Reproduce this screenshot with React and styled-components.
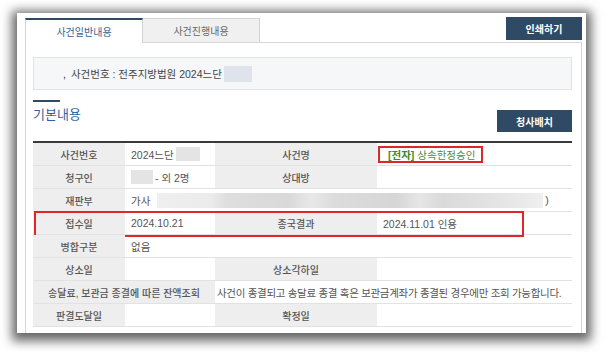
import styled, { createGlobalStyle, css } from "styled-components";

const GlobalStyle = createGlobalStyle`
  html, body {
    margin: 0;
    padding: 0;
    background: #fff;
  }
  body {
    font-family: "Liberation Sans", "Noto Sans CJK KR", sans-serif;
    overflow: hidden;
  }
  * { box-sizing: border-box; }
`

const navy = "#2f4a64";

const Page = styled.div`
  padding: 13px 0 0 17px;
  height: 352px;
`

const Window = styled.div`
  width: 569px;
  height: 320px;
  background: #fff;
  box-shadow: 0 3px 10px 5px rgba(0, 0, 0, 0.6);
  padding: 5px 4px 0 8px;
  display: flex;
  flex-direction: column;
`

const TabBar = styled.div`
  display: flex;
  align-items: flex-end;
  height: 24px;
`

const Tab = styled.div`
  width: ${p => p.$w}px;
  display: flex;
  align-items: center;
  justify-content: center;
  font-size: 10px;
  position: relative;

  ${p => p.$active ? css`
    height: 25px;
    margin-bottom: -1px;
    z-index: 1;
    background: #fff;
    color: #35618f;
    border-top: 2px solid ${navy};
    border-left: 1px solid #d3d3d3;
    border-right: 1px solid #d3d3d3;
  ` : css`
    height: 24px;
    background: #f0f0f0;
    color: #666;
    border-top: 1px solid #d3d3d3;
    border-right: 1px solid #d3d3d3;
  `}
`

const DarkButton = styled.div`
  width: ${p => p.$w}px;
  height: ${p => p.$h}px;
  background: ${navy};
  color: #fff;
  font-size: 10px;
  font-weight: 700;
  display: flex;
  align-items: center;
  justify-content: center;
`

const PrintButton = styled(DarkButton)`
  margin-left: auto;
  align-self: flex-start;
  margin-top: -1px;
`

const Content = styled.div`
  flex: 1;
  border: 1px solid #d6d6d6;
  border-bottom: none;
  padding: 0 9px 0 7px;
`

const InfoBox = styled.div`
  margin-top: 14px;
  height: 33px;
  background: #f6f7f9;
  border: 1px solid #e1e3e6;
  display: flex;
  align-items: center;
  padding-left: 29px;
  font-size: 10.5px;
  color: #444;
`

const Bullet = styled.span`
  margin-right: 5px;
  color: #333;
`

const Mask = styled.span`
  display: inline-block;
  width: ${p => p.$w}px;
  height: ${p => p.$h || 14}px;
  background: ${p => p.$bg || "#e4e4e4"};
  margin: ${p => p.$m || "0"};
`

const SectionHead = styled.div`
  display: flex;
  justify-content: space-between;
  align-items: flex-start;
  margin-top: 10px;
`

const TitleBlock = styled.div`
  &::before {
    content: "";
    display: block;
    width: 27px;
    height: 2px;
    background: ${navy};
  }
`

const Title = styled.h2`
  margin: 5px 0 0;
  font-size: 13px;
  line-height: 16px;
  font-weight: 400;
  color: #2d64a0;
`

const HeadButton = styled(DarkButton)`
  margin-top: 10px;
`

const Table = styled.div`
  margin-top: 9px;
  border-top: 2px solid #3a3a3a;
`

const Row = styled.div`
  display: grid;
  grid-template-columns: 92px 90px 162px 195px;
  height: 23px;
  border-bottom: 1px solid #e2e2e2;
  position: relative;
`

const Label = styled.div`
  grid-column: span ${p => p.$span || 1};
  background: #eeeeee;
  color: #555;
  font-size: 10px;
  font-weight: 500;
  display: flex;
  align-items: center;
  justify-content: center;
  white-space: nowrap;
`

const Value = styled.div`
  grid-column: span ${p => p.$span || 1};
  color: #555;
  font-size: 10.5px;
  display: flex;
  align-items: center;
  padding-left: ${p => p.$pl ?? 6}px;
  white-space: nowrap;
  letter-spacing: ${p => p.$ls || 0}px;
`

const Tagged = styled.span`
  display: inline-flex;
  align-items: center;
  height: 17px;
  margin-left: -5px;
  padding: 0 6px 0 8px;
  border: 2px solid #e0262b;
  color: #4f8a3f;
`

const Tag = styled.b`
  color: #3d8a2d;
  margin-right: 3px;
`

const RowHighlight = styled.div`
  position: absolute;
  top: -1px;
  left: 1px;
  width: 490px;
  height: 26px;
  border: 2px solid #e0262b;
  pointer-events: none;
`

const Strip = styled.span`
  display: inline-block;
  width: 386px;
  height: 15px;
  margin: 0 2px 0 7px;
  background: linear-gradient(90deg,
    #efefef 0%, #ebebeb 14%, #dedede 18%, #d9d9d9 34%, #e8e8e8 40%,
    #dcdcdc 46%, #d6d6d6 62%, #e6e6e6 68%, #dadada 74%, #e4e4e4 88%, #efefef 100%);
`

export default function App() {
  return (
    <>
      <GlobalStyle />
      <Page>
        <Window>
          <TabBar>
            <Tab $w={118} $active>사건일반내용</Tab>
            <Tab $w={117}>사건진행내용</Tab>
            <PrintButton $w={76} $h={23}>인쇄하기</PrintButton>
          </TabBar>

          <Content>
            <InfoBox>
              <Bullet>,</Bullet>
              사건번호 : 전주지방법원 2024느단
              <Mask $w={28} $h={16} $bg="#dfe3eb" $m="0 0 0 2px" />
            </InfoBox>

            <SectionHead>
              <TitleBlock>
                <Title>기본내용</Title>
              </TitleBlock>
              <HeadButton $w={75} $h={22}>청사배치</HeadButton>
            </SectionHead>

            <Table>
              <Row>
                <Label>사건번호</Label>
                <Value>2024느단<Mask $w={24} $m="0 0 0 2px" /></Value>
                <Label>사건명</Label>
                <Value>
                  <Tagged><Tag>[전자]</Tag>상속한정승인</Tagged>
                </Value>
              </Row>
              <Row>
                <Label>청구인</Label>
                <Value><Mask $w={22} $m="0 2px 0 0" />- 외 2명</Value>
                <Label>상대방</Label>
                <Value />
              </Row>
              <Row>
                <Label>재판부</Label>
                <Value $span={3}>가사<Strip />)</Value>
              </Row>
              <Row>
                <Label>접수일</Label>
                <Value>2024.10.21</Value>
                <Label>종국결과</Label>
                <Value>2024.11.01 인용</Value>
                <RowHighlight />
              </Row>
              <Row>
                <Label>병합구분</Label>
                <Value $span={3}>없음</Value>
              </Row>
              <Row>
                <Label>상소일</Label>
                <Value />
                <Label>상소각하일</Label>
                <Value />
              </Row>
              <Row>
                <Label $span={2}>송달료, 보관금 종결에 따른 잔액조회</Label>
                <Value $span={2} $pl={2} $ls={-0.3}>
                  사건이 종결되고 송달료 종결 혹은 보관금계좌가 종결된 경우에만 조회 가능합니다.
                </Value>
              </Row>
              <Row>
                <Label>판결도달일</Label>
                <Value />
                <Label>확정일</Label>
                <Value />
              </Row>
            </Table>
          </Content>
        </Window>
      </Page>
    </>
  );
}
